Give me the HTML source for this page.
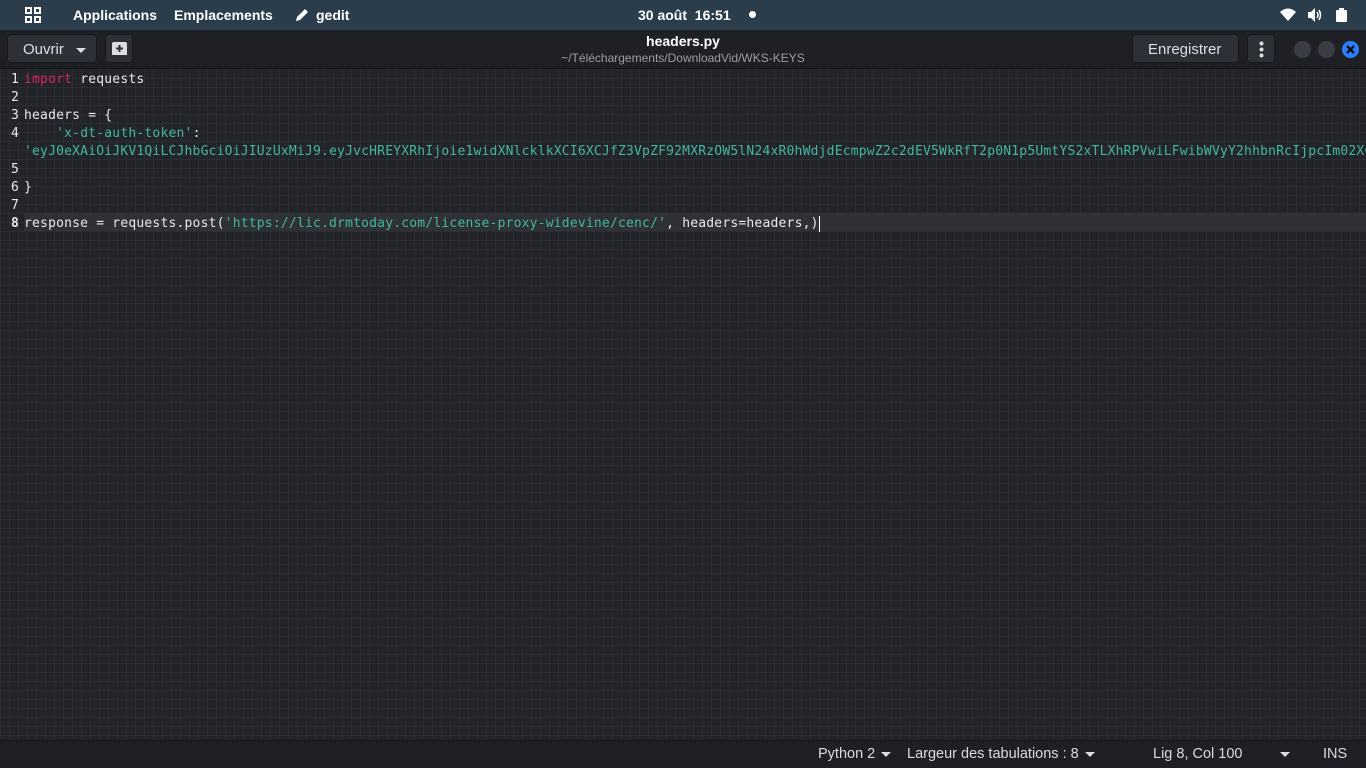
<!DOCTYPE html>
<html><head><meta charset="utf-8"><style>
*{margin:0;padding:0;box-sizing:border-box}
body{width:1366px;height:768px;overflow:hidden;background:#22242a;font-family:"Liberation Sans","DejaVu Sans",sans-serif;position:relative}
.top{position:absolute;left:0;top:0;width:1366px;height:30px;background:#2b3d4b;color:#fff;font-size:14px;font-weight:bold}
.top span{position:absolute;top:7px}
.hb{position:absolute;top:30px;left:0;width:1366px;height:39px;background:#1e2025;border-bottom:1px solid #111}
.btn{position:absolute;top:4px;height:29px;background:#2d3037;border:1px solid #17181c;border-radius:4px;color:#dde;font-size:15px}
.ed{position:absolute;top:69px;left:0;width:1366px;height:671px;background-color:#22242a;background-image:linear-gradient(#2a2d33 1px,transparent 1px),linear-gradient(90deg,#2a2d33 1px,transparent 1px);background-size:9px 9px}
.code{position:absolute;top:0;left:0;font-family:"DejaVu Sans Mono","Liberation Mono",monospace;font-size:13px;letter-spacing:0.2px;line-height:18px;color:#e8e8e8;white-space:pre}
.ln{position:absolute;left:11px;width:10px;text-align:left}
.k{color:#d4255a}.s{color:#43b6a0}
.cur{position:absolute;left:24px;top:144px;width:1342px;height:18px;background:#2f3137}
.sb{position:absolute;top:740px;left:0;width:1366px;height:28px;background:#1e2025;border-top:1px solid #15161a;color:#dcdcdc;font-size:14.5px}
.sb span{position:absolute;top:5px}
.tri{display:inline-block;width:0;height:0;border-left:5px solid transparent;border-right:5px solid transparent;border-top:5px solid #ddd;vertical-align:middle;margin-left:6px}
.circ{position:absolute;top:11px;width:17px;height:17px;border-radius:50%;background:#3a3d45}
</style></head><body>
<div class="top">
<svg style="position:absolute;left:25px;top:7px" width="16" height="16"><rect x="1" y="1" width="5" height="5" fill="none" stroke="#fff" stroke-width="2"/><rect x="10" y="1" width="5" height="5" fill="none" stroke="#fff" stroke-width="2"/><rect x="1" y="10" width="5" height="5" fill="none" stroke="#fff" stroke-width="2"/><rect x="10" y="10" width="5" height="5" fill="none" stroke="#fff" stroke-width="2"/></svg>
<span style="left:73px">Applications</span><span style="left:174px">Emplacements</span>
<svg style="position:absolute;left:294px;top:7px" width="16" height="16"><path d="M2 14 L3 10 L11 2 L14 5 L6 13 Z" fill="#fff"/></svg>
<span style="left:316px">gedit</span>
<span style="left:638px">30 août&nbsp; 16:51</span>
<div style="position:absolute;left:749px;top:11px;width:7px;height:7px;border-radius:50%;background:#fff"></div>
<svg style="position:absolute;left:1280px;top:8px" width="16" height="14"><path d="M0 4 Q8 -3 16 4 L8 13 Z" fill="#fff"/></svg>
<svg style="position:absolute;left:1307px;top:7px" width="16" height="16"><path d="M1 5 H4 L8 1 V15 L4 11 H1 Z" fill="#fff"/><path d="M10 5 Q12 8 10 11 M12 3 Q15 8 12 13" stroke="#fff" stroke-width="1.5" fill="none"/></svg>
<svg style="position:absolute;left:1336px;top:8px" width="11" height="14"><rect x="0" y="2" width="11" height="12" rx="1" fill="#fff"/><rect x="3" y="0" width="5" height="3" fill="#fff"/></svg>
</div>
<div class="hb">
<div class="btn" style="left:7px;width:90px"><span style="position:absolute;left:15px;top:6px">Ouvrir</span><span class="tri" style="position:absolute;left:62px;top:13px"></span></div>
<div class="btn" style="left:105px;width:28px"><svg style="position:absolute;left:6px;top:7px" width="15" height="13"><path d="M2 0 H13 Q15 0 15 2 V13 H0 V2 Q0 0 2 0Z" fill="#ddd"/><path d="M7.5 3 V10 M4 6.5 H11" stroke="#2d3037" stroke-width="2"/></svg></div>
<div style="position:absolute;left:0;width:1366px;top:3px;text-align:center;color:#fff;font-weight:bold;font-size:14px">headers.py</div>
<div style="position:absolute;left:0;width:1366px;top:21px;text-align:center;color:#9a9da3;font-size:12px">~/Téléchargements/DownloadVid/WKS-KEYS</div>
<div class="btn" style="left:1132px;width:107px"><span style="position:absolute;left:15px;top:6px">Enregistrer</span></div>
<div class="btn" style="left:1247px;width:28px"><svg style="position:absolute;left:11px;top:6px" width="5" height="17"><circle cx="2.5" cy="2.5" r="2" fill="#ddd"/><circle cx="2.5" cy="8.5" r="2" fill="#ddd"/><circle cx="2.5" cy="14.5" r="2" fill="#ddd"/></svg></div>
<div class="circ" style="left:1294px"></div><div class="circ" style="left:1318px"></div>
<div class="circ" style="left:1342px;background:#2a7fff"><svg width="17" height="17"><path d="M5 5 L12 12 M12 5 L5 12" stroke="#111" stroke-width="2.4"/></svg></div>
</div>
<div class="ed">
<div class="cur"></div>
<div class="code" style="top:2px;left:0">
<div class="ln" style="top:0">1</div><div class="ln" style="top:18px">2</div><div class="ln" style="top:36px">3</div><div class="ln" style="top:54px">4</div><div class="ln" style="top:90px">5</div><div class="ln" style="top:108px">6</div><div class="ln" style="top:126px">7</div><div class="ln" style="top:144px;font-weight:bold">8</div>
<div style="position:absolute;left:24px;top:0"><span class="k">import</span> requests

headers = {
    <span class="s">'x-dt-auth-token'</span>:
<span class="s">'eyJ0eXAiOiJKV1QiLCJhbGciOiJIUzUxMiJ9.eyJvcHREYXRhIjoie1widXNlcklkXCI6XCJfZ3VpZF92MXRzOW5lN24xR0hWdjdEcmpwZ2c2dEV5WkRfT2p0N1p5UmtYS2xTLXhRPVwiLFwibWVyY2hhbnRcIjpcIm02XCJ9'</span>

}

response = requests.post(<span class="s">'https://lic.drmtoday.com/license-proxy-widevine/cenc/'</span>, headers=headers,)<span style="display:inline-block;width:1px;height:16px;background:#fff;vertical-align:middle"></span></div>
</div>
</div>
<div class="sb">
<span style="left:818px">Python 2<i class="tri"></i></span>
<span style="left:907px">Largeur des tabulations : 8<i class="tri"></i></span>
<span style="left:1153px">Lig 8, Col 100</span>
<span style="left:1274px"><i class="tri"></i></span>
<span style="left:1323px">INS</span>
</div>
</body></html>
